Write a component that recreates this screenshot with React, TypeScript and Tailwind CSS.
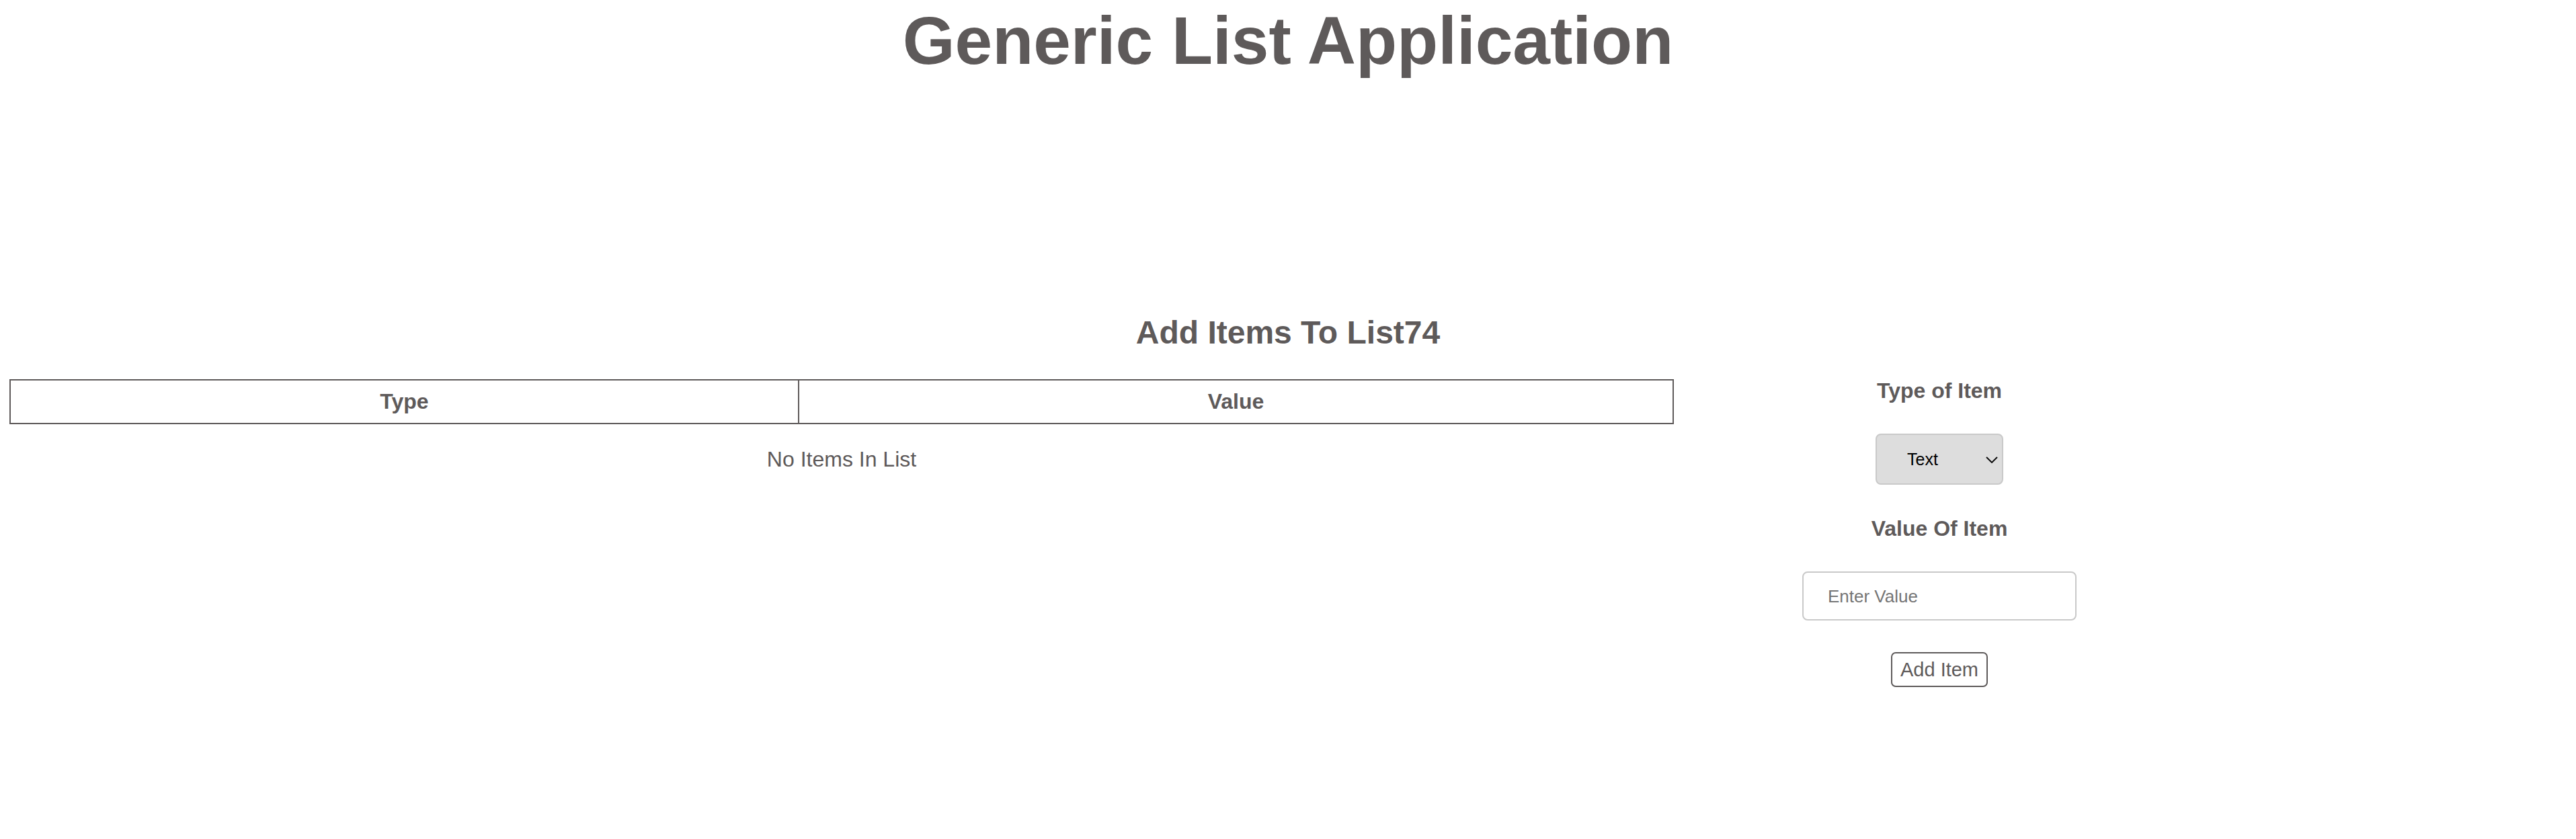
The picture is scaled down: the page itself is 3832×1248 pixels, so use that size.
import React from "react";

export default function App() {
  return (
    <div
      className="w-[3832px] min-h-[1248px] bg-white text-[#5e5a5a]"
      style={{ fontFamily: '"Liberation Sans", Arial, sans-serif' }}
    >
      <h1 className="pt-[3px] text-center text-[100px] font-bold leading-[115px]">
        Generic List Application
      </h1>
      <h2 className="mt-[349px] text-center text-[48px] font-bold leading-[55px]">
        Add Items To List74
      </h2>
      <div className="mt-[42px] flex">
        <div className="w-[2504px] px-[14px]">
          <table className="w-full border-collapse">
            <thead>
              <tr>
                <th className="w-[1173px] border-2 border-[#5e5a5a] py-[13px] text-[32px] font-bold leading-[37px]">
                  Type
                </th>
                <th className="border-2 border-[#5e5a5a] py-[13px] text-[32px] font-bold leading-[37px]">
                  Value
                </th>
              </tr>
            </thead>
          </table>
          <p className="mt-[34px] text-center text-[32px] leading-[37px]">No Items In List</p>
        </div>
        <div className="flex w-[762px] flex-col items-center">
          <div className="-mt-[1px] text-[32px] font-bold leading-[37px]">Type of Item</div>
          <div className="relative mt-[45px] h-[76px] w-[190px]">
            <select
              className="h-full w-full appearance-none rounded-[8px] border-2 border-[#c9c9c9] bg-[#dddddd] pl-[45px] pt-[2px] text-[25px] text-black outline-none"
              style={{ fontFamily: '"Liberation Sans", Arial, sans-serif' }}
              defaultValue="Text"
            >
              <option value="Text">Text</option>
              <option value="Number">Number</option>
            </select>
            <svg
              className="pointer-events-none absolute right-[8px] top-[34px]"
              width="18"
              height="10"
              viewBox="0 0 18 10"
              fill="none"
            >
              <polyline points="1,1 9,9 17,1" stroke="#111" strokeWidth="2" />
            </svg>
          </div>
          <div className="mt-[47px] text-[32px] font-bold leading-[37px]">Value Of Item</div>
          <input
            className="mt-[45px] h-[73px] w-[408px] rounded-[8px] border-2 border-[#c9c9c9] bg-white pl-[36px] pt-[2px] text-[26px] text-black outline-none placeholder:text-[#757575]"
            style={{ fontFamily: '"Liberation Sans", Arial, sans-serif' }}
            placeholder="Enter Value"
          />
          <button
            className="mt-[47px] h-[52px] rounded-[7px] border-2 border-[#5e5a5a] bg-white px-[12px] text-[29px] leading-[33px] text-[#5e5a5a]"
            style={{ fontFamily: '"Liberation Sans", Arial, sans-serif' }}
          >
            Add Item
          </button>
        </div>
      </div>
    </div>
  );
}
